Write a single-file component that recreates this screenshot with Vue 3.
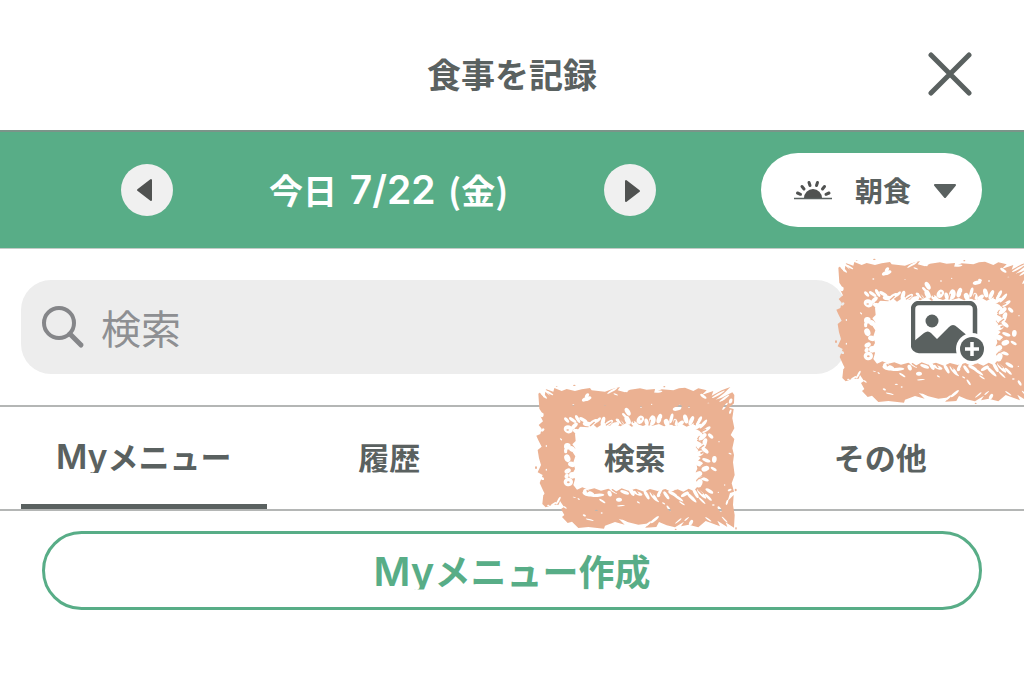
<script setup>
import { ref } from 'vue'

const meal = ref('朝食')
const query = ref('')
const active = ref('my')
const tabs = [
  { id: 'my', latin: 'My', label: 'メニュー' },
  { id: 'history', label: '履歴' },
  { id: 'search', label: '検索', marked: true },
  { id: 'other', label: 'その他' },
]

// Flecks in the chalk texture: centre x, centre y, radius x, radius y, angle
const flecks = [
  [185, 72, 15, 6, -20], [186, 62, 8, 5, -50], [55, 60, 15, 3, 45], [74, 54, 12, 3, 30],
  [51, 120, 5, 7, 10], [53, 165, 6, 4, -40], [262, 47, 18, 3, -30], [272, 58, 7, 2, 20],
  [400, 50, 12, 3, -5], [300, 47, 9, 3, 20], [456, 101, 13, 6, -12], [465, 94, 6, 4, 20],
  [348, 96, 2, 3, 0], [380, 88, 2, 2, 0], [240, 92, 2, 1, 0], [535, 64, 11, 4, 35],
  [580, 58, 22, 3, -30], [598, 70, 18, 3, -35], [617, 78, 5, 8, 20], [600, 94, 13, 3, -55],
  [616, 110, 3, 7, 20], [492, 96, 3, 2, 0], [550, 84, 3, 1, 0], [145, 90, 3, 2, 0],
  [125, 135, 10, 5, 50], [143, 135, 13, 5, 35], [158, 132, 13, 5, 60], [175, 135, 14, 5, 30],
  [130, 163, 14, 12, 20], [148, 153, 13, 6, -45], [157, 170, 14, 7, 25], [188, 147, 15, 7, 10],
  [204, 143, 17, 7, -35], [220, 135, 10, 4, -45], [234, 139, 6, 14, 15], [252, 144, 14, 6, -35],
  [270, 149, 13, 7, -20], [284, 140, 14, 5, 35], [308, 110, 7, 13, -30], [308, 136, 8, 14, -25],
  [298, 121, 9, 4, 45], [329, 147, 11, 7, 35], [346, 134, 10, 13, 30], [365, 142, 6, 12, -15],
  [382, 136, 10, 15, 10], [403, 131, 7, 15, 20], [425, 143, 8, 12, -20], [439, 130, 5, 15, 15],
  [452, 142, 6, 11, -15], [467, 145, 11, 6, -35], [482, 132, 7, 14, -15], [499, 137, 6, 15, 25],
  [522, 138, 5, 16, 30], [535, 147, 5, 17, 40], [514, 157, 18, 6, -30], [544, 164, 15, 5, -35],
  [519, 173, 14, 7, 30], [533, 185, 14, 7, -40], [557, 183, 10, 5, 45], [538, 205, 7, 16, 20],
  [521, 208, 9, 14, -15], [540, 226, 13, 6, 40], [523, 236, 13, 8, -25], [568, 253, 7, 10, 5],
  [544, 256, 13, 5, 20], [523, 266, 11, 8, 20], [541, 281, 12, 8, -20], [566, 282, 10, 4, 30],
  [521, 297, 11, 8, -20], [537, 312, 15, 5, 20], [523, 325, 9, 13, 20], [553, 348, 13, 5, 30],
  [127, 214, 10, 10, 10], [122, 227, 5, 8, 0], [141, 222, 9, 8, 30], [127, 250, 9, 12, -20],
  [140, 268, 11, 8, 20], [128, 288, 10, 7, -30], [130, 321, 14, 13, 10], [142, 301, 10, 10, 0],
  [125, 303, 6, 8, 30], [190, 356, 18, 8, 10], [218, 361, 20, 5, -5], [183, 350, 9, 9, 0],
  [148, 367, 5, 1, 15], [161, 372, 4, 2, 40], [232, 378, 11, 3, 35], [282, 374, 9, 6, -5],
  [254, 356, 6, 9, -20], [288, 392, 12, 2, -5], [265, 348, 13, 4, 35], [299, 352, 14, 5, 20],
  [320, 350, 6, 14, -30], [338, 355, 15, 5, 20], [365, 360, 5, 15, -30], [386, 365, 5, 18, -40],
  [405, 353, 6, 15, 30], [424, 361, 5, 14, -35], [443, 356, 15, 5, 30], [459, 368, 19, 4, 35],
  [481, 357, 15, 5, -30], [500, 368, 20, 5, 45], [512, 355, 5, 16, -30], [530, 357, 19, 5, 45],
  [550, 367, 14, 4, 45], [531, 377, 14, 3, 45], [471, 385, 10, 2, 35], [431, 400, 10, 3, 55],
  [416, 385, 5, 2, 30], [398, 378, 5, 2, 40], [214, 406, 5, 2, 0], [178, 421, 5, 3, 20],
  [194, 434, 12, 2, 15], [230, 414, 3, 2, 0], [300, 440, 12, 2, 30], [389, 434, 16, 4, -40],
  [370, 446, 10, 3, -40], [460, 438, 12, 2, -40], [485, 432, 9, 2, -40], [498, 443, 5, 9, 30],
  [550, 433, 11, 2, 35], [584, 402, 9, 4, 55], [565, 390, 4, 2, 0], [599, 434, 12, 2, 45],
  [606, 382, 3, 8, 20], [614, 345, 6, 3, -20], [100, 377, 3, 13, 30], [86, 387, 10, 3, -30],
  [70, 391, 4, 2, 0], [55, 355, 3, 5, 0], [51, 310, 7, 4, 30], [64, 284, 2, 3, 0],
  [64, 213, 2, 3, 0], [108, 193, 4, 2, 40], [582, 200, 2, 2, 0], [615, 236, 5, 2, 20],
  [599, 330, 2, 2, 0], [580, 352, 2, 2, 0], [120, 397, 6, 2, 35], [340, 382, 5, 2, 30],
]
</script>

<template>
  <main class="app">
    <svg class="defs" aria-hidden="true">
      <defs>
        <mask id="chalk-mask" maskUnits="userSpaceOnUse" x="25" y="20" width="620" height="460">
          <rect x="25" y="20" width="620" height="460" fill="#fff" />
          <path
            fill="#000"
            d="M150 176 165 155 190 157 202 146 216 158 238 143 250 153 268 148 286 154 304 144 320 155 338 148 354 153 370 146 383 152 402 147 417 154 438 149 451 153 470 147 485 155 506 145 514 157 508 168 524 179 516 191 528 201 512 216 520 226 514 240 527 249 514 263 517 281 512 292 525 304 513 316 521 331 506 348 491 341 475 350 458 343 438 350 421 342 398 348 375 342 357 350 333 341 310 347 290 340 271 351 250 341 228 347 208 340 190 344 172 337 156 344 145 330 150 312 142 296 150 282 145 262 151 244 143 232 151 220 142 208 152 198Z"
          />
          <ellipse
            v-for="(f, i) in flecks"
            :key="i"
            :cx="f[0]"
            :cy="f[1]"
            :rx="f[2]"
            :ry="f[3]"
            :transform="`rotate(${f[4]} ${f[0]} ${f[1]})`"
            fill="#000"
          />
        </mask>
        <symbol id="chalk" viewBox="30 24 606 444">
          <g fill="#ebb192">
            <path
              mask="url(#chalk-mask)"
              d="M40 56 46 52 58 70 61 50 75 62 62 42 85 50 88 39 110 48 125 42 150 48 170 43 195 39 200 46 240 50 262 42 285 36 278 46 300 52 315 44 345 40 365 44 390 42 388 53 410 43 445 46 462 40 480 38 505 48 520 40 545 46 530 60 565 48 560 62 590 46 616 36 598 54 572 74 590 68 622 52 628 60 627 85 612 98 626 102 622 130 628 160 617 180 628 192 622 220 627 240 624 262 629 300 620 325 627 350 615 354 608 378 626 360 624 390 629 420 627 458 602 442 607 456 577 437 585 454 542 438 520 457 491 449 468 454 477 440 450 457 425 451 402 441 394 456 360 458 374 445 340 449 310 442 281 431 299 449 270 441 240 452 237 461 190 456 160 459 141 440 128 444 111 426 118 420 108 402 117 396 105 378 101 389 85 389 62 397 52 387 56 350 44 324 53 300 38 292 48 270 42 250 38 225 50 215 40 196 34 182 46 177 50 161 41 150 54 139 47 125 52 115 43 101Z"
            />
            <ellipse cx="148" cy="31" rx="4" ry="2" />
            <ellipse cx="95" cy="34" rx="3" ry="1" />
            <ellipse cx="418" cy="35" rx="3" ry="2" />
            <ellipse cx="33" cy="278" rx="3" ry="4" />
            <ellipse cx="632" cy="345" rx="3" ry="4" />
            <ellipse cx="633" cy="460" rx="2" ry="4" />
            <ellipse cx="452" cy="463" rx="3" ry="2" />
            <ellipse cx="128" cy="165" rx="4" ry="2" />
            <ellipse cx="348" cy="132" rx="2" ry="4" />
            <ellipse cx="130" cy="322" rx="4" ry="3" />
            <path d="m173 82 12-4 3 5-10 3ZM184 344l10 4-8 5ZM525 233l8-4 3 4-8 5Z" />
            <path
              d="m152 160 14-8M196 152l12-10M244 150l14-9M292 146l-8-12M326 142l-6-12M372 150l4-14M414 148l-3-16M446 150l4-14M508 148l8-12M528 170l14-7M518 196l14 8M524 220l12-9M528 274l10-9M524 310l13-6M136 238l8 6M136 278l9 4M262 344l12 8M330 344l9 11M374 346l10 14M414 346l-7 14M450 346l14 12M490 348l14 14M520 344l12 12"
              fill="none"
              stroke="#ebb192"
              stroke-width="4"
              stroke-linecap="round"
            />
          </g>
        </symbol>
      </defs>
    </svg>

    <header class="header">
      <h1>食事を記録</h1>
      <button class="close" type="button" aria-label="閉じる">
        <svg viewBox="0 0 44 44" width="44" height="44" aria-hidden="true">
          <path d="M3 3 41 41M41 3 3 41" fill="none" stroke="#5a6160" stroke-width="5" stroke-linecap="round" />
        </svg>
      </button>
    </header>

    <section class="datebar">
      <div class="datenav">
        <button class="round" type="button" aria-label="前の日">
          <svg viewBox="0 0 52 52" width="52" height="52" aria-hidden="true">
            <path d="M30 16v20L17 26Z" fill="#505251" stroke="#505251" stroke-width="2" stroke-linejoin="round" />
          </svg>
        </button>
        <span class="date">今日 <span class="digits">7/22</span> (金)</span>
        <button class="round" type="button" aria-label="次の日">
          <svg viewBox="0 0 52 52" width="52" height="52" aria-hidden="true">
            <path d="M22 17v20l13-10Z" fill="#505251" stroke="#505251" stroke-width="2" stroke-linejoin="round" />
          </svg>
        </button>
      </div>
      <div class="meal">
        <svg class="sun" viewBox="0 0 40 20" width="40" height="20" aria-hidden="true">
          <path d="M11 18a9 9 0 0 1 18 0Z" fill="#505251" />
          <path d="M1 18.500h38" stroke="#5a6160" stroke-width="1.500" />
          <path d="m4.500 13 3 1.300M9 6.500l2 2.500M16 2.500l1 3M24.500 2.500l-1 3M31.500 6.500 29.500 9M36 13l-3 1.300" fill="none" stroke="#505251" stroke-width="3" stroke-linecap="round" />
        </svg>
        <select v-model="meal" aria-label="食事の種類">
          <option>朝食</option>
          <option>昼食</option>
          <option>夕食</option>
          <option>間食</option>
        </select>
        <svg class="caret" viewBox="0 0 24 16" width="24" height="16" aria-hidden="true">
          <path d="M2 3h20L12 15Z" fill="#5a6160" stroke="#5a6160" stroke-width="2" stroke-linejoin="round" />
        </svg>
      </div>
    </section>

    <section class="searchrow">
      <label class="searchbox">
        <svg viewBox="0 0 44 44" width="44" height="44" aria-hidden="true">
          <circle cx="18" cy="18" r="15" fill="none" stroke="#858689" stroke-width="4" />
          <path d="m29 29 11 11" stroke="#858689" stroke-width="5" stroke-linecap="round" />
        </svg>
        <input v-model="query" type="text" placeholder="検索" aria-label="検索" />
      </label>
      <button class="photo" type="button" aria-label="写真を追加">
        <svg class="picture" viewBox="0 0 74 61" width="74" height="61" aria-hidden="true">
          <rect x="2" y="2" width="62" height="48" rx="6" fill="#fff" stroke="#5a6160" stroke-width="4.500" />
          <circle cx="21" cy="20" r="6.500" fill="#5a6160" />
          <path d="M2 41 13 32q4-3 7 0l6 6 12-12q4-4 8 0l18 15v9H9q-7 0-7-6Z" fill="#5a6160" />
          <circle cx="61" cy="48" r="16" fill="#fff" />
          <circle cx="61" cy="48" r="12" fill="#5a6160" />
          <path d="M61 41v14M54 48h14" stroke="#fff" stroke-width="3.500" />
        </svg>
        <svg class="chalk" width="202" height="148" aria-hidden="true"><use href="#chalk" /></svg>
      </button>
    </section>

    <nav class="tabs">
      <button
        v-for="tab in tabs"
        :key="tab.id"
        type="button"
        :class="['tab', { active: active === tab.id }]"
        @click="active = tab.id"
      >
        <svg v-if="tab.marked" class="chalk" width="202" height="148" aria-hidden="true"><use href="#chalk" /></svg>
        <span class="label"><span v-if="tab.latin" class="latin">{{ tab.latin }}</span>{{ tab.label }}</span>
      </button>
    </nav>

    <div class="content">
      <button class="create" type="button">
        <span class="label"><span class="latin">My</span>メニュー作成</span>
      </button>
    </div>
  </main>
</template>

<style>
body {
  background: #fff;
}
</style>

<style scoped>
.app {
  overflow: hidden;
  color: #5a6160;
  font-family: "Noto Sans CJK JP", sans-serif;
  font-weight: 700;
}

.app * {
  box-sizing: border-box;
}

svg {
  display: block;
}

button {
  margin: 0;
  padding: 0;
  border: 0;
  background: none;
  color: inherit;
  font: inherit;
}

.defs {
  position: absolute;
  width: 0;
  height: 0;
}

.header {
  display: grid;
  grid-template-columns: 1fr auto 1fr;
  align-items: center;
  height: 132px;
  padding: 18px 52px 0;
  border-bottom: 2px solid #7b9489;
}

h1 {
  grid-column: 2;
  margin: 0;
  font-size: 34px;
  line-height: 48px;
  font-weight: 700;
}

.close {
  justify-self: end;
}

.datebar {
  display: flex;
  align-items: center;
  justify-content: space-between;
  height: 117px;
  padding: 0 42px 0 121px;
  background: #58ad87;
  border-bottom: 1px solid #c4cbc7;
}

.datenav {
  display: flex;
  flex: 0 1 535px;
  align-items: center;
  justify-content: space-between;
}

.round {
  border-radius: 50%;
  background: #f0f0f0;
}

.date {
  color: #fff;
  font-size: 34px;
  line-height: 48px;
  white-space: nowrap;
}

.digits {
  margin: 0 5px;
  font-family: Inter, sans-serif;
  font-size: 39px;
  font-weight: 600;
}

.meal {
  position: relative;
  display: flex;
  align-items: center;
  width: 221px;
  height: 74px;
  border-radius: 37px;
  background: #fff;
}

select {
  width: 100%;
  height: 100%;
  padding: 0 0 0 94px;
  border: 0;
  border-radius: 37px;
  background: none;
  appearance: none;
  color: inherit;
  font: inherit;
  font-size: 28px;
}

.sun,
.caret {
  position: absolute;
  pointer-events: none;
}

.sun {
  left: 32px;
}

.caret {
  right: 25px;
}

.searchrow {
  display: flex;
  align-items: center;
  height: 156px;
  padding-left: 21px;
}

.searchbox {
  display: flex;
  flex: 1;
  align-items: center;
  gap: 16px;
  height: 94px;
  padding: 0 20px;
  border-radius: 30px;
  background: #ededed;
}

input {
  flex: 1;
  min-width: 0;
  height: 60px;
  padding: 0;
  border: 0;
  outline: 0;
  background: none;
  color: #5a6160;
  font: inherit;
  font-size: 40px;
  font-weight: 400;
}

input::placeholder {
  color: #8e8f92;
  opacity: 1;
}

.photo {
  position: relative;
  display: flex;
  justify-content: flex-end;
  width: 178px;
  padding: 8px 39px 0 0;
}

.photo .chalk {
  position: absolute;
  top: -36px;
  left: -11px;
}

.tabs {
  display: grid;
  grid-template-columns: repeat(4, 1fr);
  height: 106px;
  padding: 0 21px;
  border-top: 2px solid #b4b6b5;
  border-bottom: 2px solid #b4b6b5;
}

.tab {
  position: relative;
  display: flex;
  align-items: center;
  justify-content: center;
  padding-top: 2px;
  border-bottom: 5px solid transparent;
  font-size: 31px;
}

.tab.active {
  border-color: #5a6160;
}

.tab .chalk {
  position: absolute;
  top: -24px;
  left: 23px;
}

.label {
  position: relative;
  line-height: 48px;
  white-space: nowrap;
  clip-path: inset(0 0 8px 0);
}

.latin {
  font-family: Inter, sans-serif;
  font-size: 34px;
  font-weight: 600;
}

.content {
  padding: 20px 42px;
}

.create {
  display: flex;
  align-items: center;
  justify-content: center;
  width: 100%;
  height: 79px;
  border: 3px solid #58ad87;
  border-radius: 40px;
  color: #58ad87;
  font-size: 36px;
}

.create .label {
  line-height: 52px;
}

.create .latin {
  font-size: 40px;
}
</style>
